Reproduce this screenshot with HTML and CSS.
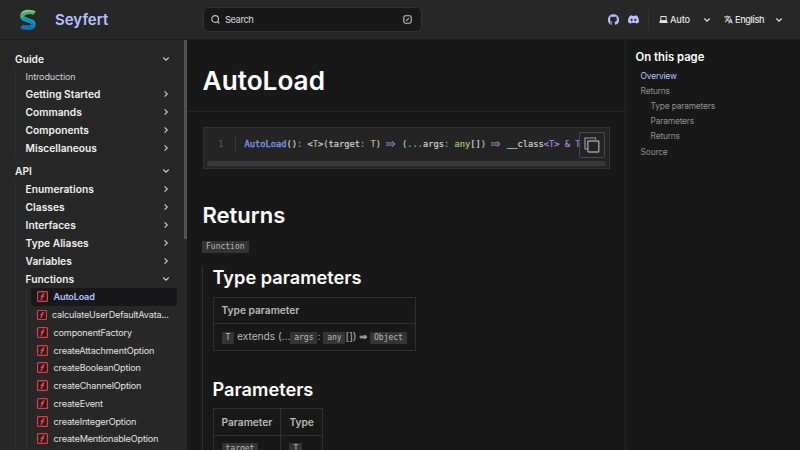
FILE: index.html
```html
<!DOCTYPE html>
<html lang="en">
<head>
<meta charset="utf-8">
<title>AutoLoad | Seyfert</title>
<link rel="stylesheet" href="styles.css">
</head>
<body>
<svg class="defs" aria-hidden="true">
  <symbol id="right" viewBox="0 0 6 8"><path d="M1.6 1.4 4.3 4 1.6 6.6" fill="none" stroke="currentColor" stroke-width="1.05"/></symbol>
  <symbol id="down" viewBox="0 0 8 6"><path d="M1.3 1.5 4 4.2 6.7 1.5" fill="none" stroke="currentColor" stroke-width="1.1"/></symbol>
  <symbol id="fn" viewBox="0 0 11 11"><rect x=".6" y=".6" width="9.8" height="9.8" rx=".9" fill="#29191c" stroke="#dd4044" stroke-width="1.2"/><path d="M7.6 3.1C6.4 2.6 5.8 3 5.6 4L5 7.1C4.8 8 4.3 8.2 3.5 7.9M3.7 5.2H7" fill="none" stroke="#e84449" stroke-width="1.35"/></symbol>
</svg>
<header class="header">
  <a class="brand">
    <svg class="logo" viewBox="0 0 20 22">
      <defs><linearGradient id="g" x1="0" y1="0" x2="0" y2="1"><stop offset="0" stop-color="#80d15b"/><stop offset=".28" stop-color="#27b996"/><stop offset=".6" stop-color="#159fc4"/><stop offset="1" stop-color="#1476bd"/></linearGradient></defs>
      <path d="M16.500 4.300C14.500 3 12 2.800 9.500 3C3.500 3.400 2.800 9 7 10.300L13.200 12.400C17 14 15.800 18.500 11.500 18.700H8C6 18.700 4.500 18.200 3.500 17.200" fill="none" stroke="url(#g)" stroke-width="4.300"/>
      <path d="M4.500 6.500C5.500 4.200 8 3.600 11 3.700L16.500 4.600M5 9.400 13 12.500C15.800 14.200 15 18 11.500 18.500H4" fill="none" stroke="#145b87" stroke-width=".6"/>
    </svg>
    <span class="name">Seyfert</span>
  </a>
  <div class="search">
    <svg width="9" height="9" viewBox="0 0 9 9"><path d="M6.5 6.5 8.4 8.4M7.5 4A3.4 3.4 0 1 1 .7 4a3.4 3.4 0 0 1 6.8 0Z" fill="none" stroke="currentColor" stroke-width="1.1"/></svg>
    <span>Search</span>
    <svg class="key" width="9" height="9" viewBox="0 0 9 9"><rect x=".8" y=".8" width="7.4" height="7.4" rx="1.6" fill="none" stroke="currentColor" stroke-width="1.1"/><path d="M3.1 5.9 5.9 3.1" stroke="currentColor" stroke-width="1.1"/></svg>
  </div>
  <div class="tools">
    <svg class="github" viewBox="0 0 24 24"><path fill="currentColor" d="M12 .3a12 12 0 0 0-3.8 23.4c.6.1.8-.3.8-.6v-2c-3.3.7-4-1.6-4-1.6-.6-1.4-1.4-1.8-1.4-1.8-1-.7.1-.7.1-.7 1.2 0 1.9 1.2 1.9 1.2 1 1.8 2.8 1.3 3.5 1 0-.8.4-1.3.7-1.6-2.7-.3-5.5-1.3-5.5-6 0-1.2.5-2.3 1.3-3.1-.2-.4-.6-1.6 0-3.2 0 0 1-.3 3.4 1.2a11.5 11.5 0 0 1 6 0c2.3-1.5 3.3-1.2 3.3-1.2.6 1.6.2 2.8 0 3.2.9.8 1.3 1.9 1.3 3.2 0 4.6-2.8 5.6-5.5 5.9.5.4.9 1 .9 2.2v3.3c0 .3.1.7.8.6A12 12 0 0 0 12 .3"/></svg>
    <svg class="discord" viewBox="0 0 24 24"><path fill="currentColor" d="M20.3 4.4a19.8 19.8 0 0 0-4.9-1.5c-.2.4-.5.9-.6 1.3a18.3 18.3 0 0 0-5.5 0c-.2-.4-.4-.9-.7-1.3a19.7 19.7 0 0 0-4.9 1.5C.5 9-.3 13.6.1 18.1a19.9 19.9 0 0 0 6 3c.5-.6.9-1.3 1.2-2l-1.9-.9.4-.3a14.2 14.2 0 0 0 12.4 0l.4.3-1.9.9c.4.7.8 1.4 1.2 2a19.8 19.8 0 0 0 6-3c.5-5.2-.8-9.7-3.6-13.7ZM8 15.3c-1.2 0-2.2-1.1-2.2-2.4S6.8 10.5 8 10.5s2.2 1.1 2.2 2.4S9.200 15.3 8 15.3Zm8 0c-1.200 0-2.200-1.100-2.200-2.400s1-2.400 2.200-2.400 2.200 1.100 2.200 2.400-1 2.400-2.200 2.400Z"/></svg>
    <div class="select theme">
      <svg class="ic" viewBox="0 0 9 9"><path d="M1.8 5.7V1.500H7.200V5.700Z" fill="none" stroke="currentColor" stroke-width="1"/><path d="M.9 5.500H8.100L8.700 7.900H.3Z" fill="currentColor"/></svg>
      <span>Auto</span><svg class="down"><use href="#down"/></svg>
    </div>
    <div class="select lang">
      <svg class="ic" viewBox="0 0 24 24"><path fill="currentColor" d="m12.9 15-2.500-2.500c1.700-1.900 3-4.200 3.700-6.500H17V4h-7V2H8v2H1v2h11.200C11.500 7.900 10.400 9.800 9 11.300 8.100 10.300 7.300 9.200 6.700 8h-2c.7 1.600 1.700 3.200 3 4.600l-5.100 5L4 19l5-5 3.100 3.100.8-2.100Zm5.600-5h-2L12 22h2l1.100-3h4.800l1.100 3h2l-4.500-12Zm-2.600 7 1.600-4.300 1.600 4.300h-3.200Z" stroke="currentColor" stroke-width=".8"/></svg>
      <span>English</span><svg class="down"><use href="#down"/></svg>
    </div>
  </div>
</header>
<div class="layout">
  <nav class="sidebar">
    <div class="group top"><span>Guide</span><svg class="down"><use href="#down"/></svg></div>
    <div class="branch guide">
      <a class="page">Introduction</a>
      <div class="group"><span>Getting Started</span><svg class="right"><use href="#right"/></svg></div>
      <div class="group"><span>Commands</span><svg class="right"><use href="#right"/></svg></div>
      <div class="group"><span>Components</span><svg class="right"><use href="#right"/></svg></div>
      <div class="group"><span>Miscellaneous</span><svg class="right"><use href="#right"/></svg></div>
    </div>
    <div class="group top"><span>API</span><svg class="down"><use href="#down"/></svg></div>
    <div class="branch">
      <div class="group"><span>Enumerations</span><svg class="right"><use href="#right"/></svg></div>
      <div class="group"><span>Classes</span><svg class="right"><use href="#right"/></svg></div>
      <div class="group"><span>Interfaces</span><svg class="right"><use href="#right"/></svg></div>
      <div class="group"><span>Type Aliases</span><svg class="right"><use href="#right"/></svg></div>
      <div class="group"><span>Variables</span><svg class="right"><use href="#right"/></svg></div>
      <div class="group"><span>Functions</span><svg class="down"><use href="#down"/></svg></div>
      <div class="leaves">
        <a class="leaf current"><svg><use href="#fn"/></svg><span>AutoLoad</span></a>
        <a class="leaf long"><svg viewBox="0 0 11 11"><use href="#fn" width="11" height="11"/></svg><span>calculateUserDefaultAvata...</span></a>
        <a class="leaf"><svg><use href="#fn"/></svg><span>componentFactory</span></a>
        <a class="leaf"><svg><use href="#fn"/></svg><span>createAttachmentOption</span></a>
        <a class="leaf"><svg><use href="#fn"/></svg><span>createBooleanOption</span></a>
        <a class="leaf"><svg><use href="#fn"/></svg><span>createChannelOption</span></a>
        <a class="leaf"><svg><use href="#fn"/></svg><span>createEvent</span></a>
        <a class="leaf"><svg><use href="#fn"/></svg><span>createIntegerOption</span></a>
        <a class="leaf"><svg><use href="#fn"/></svg><span>createMentionableOption</span></a>
      </div>
    </div>
    <div class="thumb"></div>
  </nav>
  <main class="main">
    <div class="title"><h1>AutoLoad</h1></div>
    <div class="content">
      <div class="code">
        <div class="line"><span class="num">1</span><code><b class="fn">AutoLoad</b>()<i class="op">:</i> &lt;<i class="ty">T</i>&gt;<i class="pa">(</i>target<i class="op">:</i> <i class="ty">T</i><i class="pa">)</i> <span class="arrow"><svg viewBox="0 0 10 6"><path d="M0 1.900H7.700M0 4.100H7.700M6.200.4 9 3 6.200 5.600" fill="none" stroke="currentColor" stroke-width=".9"/></svg></span> <i class="pa">(</i><i class="op">...</i>args<i class="op">:</i> <i class="any">any</i>[]<i class="pa">)</i> <span class="arrow"><svg viewBox="0 0 10 6"><path d="M0 1.900H7.700M0 4.100H7.700M6.200.4 9 3 6.200 5.600" fill="none" stroke="currentColor" stroke-width=".9"/></svg></span> __class<i class="kw">&lt;</i><i class="fn">T</i><i class="kw">&gt;</i> <i class="kw">&amp;</i> <i class="fn">T</i></code></div>
        <div class="scroll"></div>
        <div class="copy"><svg viewBox="0 0 16 16"><path d="M3.500 12H1V1H11.500V2.500" fill="none" stroke="currentColor" stroke-width="1.200"/><rect x="3.800" y="4" width="11" height="11" rx=".7" fill="none" stroke="currentColor" stroke-width="1.400"/></svg></div>
      </div>
      <h2>Returns</h2>
      <p class="ret"><code class="tag">Function</code></p>
      <div class="nested">
        <h3>Type parameters</h3>
        <table class="t1">
          <tr><th>Type parameter</th></tr>
          <tr><td><code class="tag">T</code> extends (...<code class="tag">args</code>: <code class="tag">any</code>[]) <span class="imp">⇒</span> <code class="tag">Object</code></td></tr>
        </table>
        <h3 class="second">Parameters</h3>
        <table class="t2">
          <tr><th>Parameter</th><th>Type</th></tr>
          <tr><td><code class="tag">target</code></td><td><code class="tag">T</code></td></tr>
        </table>
      </div>
    </div>
  </main>
  <aside class="toc">
    <h4>On this page</h4>
    <a class="on">Overview</a>
    <a>Returns</a>
    <a class="sub">Type parameters</a>
    <a class="sub">Parameters</a>
    <a class="sub">Returns</a>
    <a>Source</a>
  </aside>
</div>
</body>
</html>
```
FILE: styles.css
```css
* { box-sizing: border-box; }
html, body { height: 100%; overflow: hidden; }
body { margin: 0; background: #181818; color: #c2c2c2; font-family: Inter, sans-serif; font-size: 9px; display: flex; flex-direction: column; }
.defs { display: none; }
svg { flex: none; display: block; }
i { font-style: normal; }
.header { height: 40px; flex: none; background: #272727; border-bottom: 1px solid #202020; display: flex; align-items: center; }
.brand { width: 203px; display: flex; align-items: center; padding-left: 18px; }
.logo { width: 20px; height: 22px; }
.name { margin-left: 17px; color: #b3c1ff; font-size: 15px; font-weight: 600; }
.search { width: 219px; height: 25px; border: 1px solid #333; border-radius: 5px; background: #181818; display: flex; align-items: center; padding: 0 9px 0 7px; color: #c2c2c2; }
.search span { margin-left: 5px; font-size: 9.2px; font-weight: 500; letter-spacing: -.4px; }
.key { margin-left: auto; }
.tools { flex: 1; display: flex; align-items: center; padding-left: 186px; color: #b3c1ff; }
.github { width: 11px; height: 11px; }
.discord { width: 11px; height: 11px; margin-left: 9px; }
.select { flex: none; display: flex; align-items: center; color: #e4e4e4; font-size: 9.200px; font-weight: 500; letter-spacing: -.2px; }
.theme { width: 63px; margin-left: 9px; padding-left: 10px; height: 20px; border-left: 1px solid #343434; }
.lang { width: 59px; margin-left: 13px; letter-spacing: -.4px; }
.select .ic { width: 9px; height: 9px; margin-right: 2px; }
.select .down { margin-left: auto; }
.down { width: 8px; height: 6px; }
.right { width: 6px; height: 8px; margin-right: 1px; }
.layout { flex: 1; min-height: 0; display: flex; }
.sidebar { position: relative; width: 187px; flex: none; background: #272727; padding: 10px 17px 0 15px; overflow: hidden; }
.thumb { position: absolute; right: 0; top: 0; width: 3px; height: 199px; background: #535353; }
.group { height: 18px; display: flex; align-items: center; justify-content: space-between; font-weight: 600; font-size: 10.200px; color: #f0f0f0; }
.group span { letter-spacing: .02px; }
.group svg { color: #d2d2d2; }
.branch { border-left: 1px solid #303030; padding-left: 9.600px; }
.guide { margin-bottom: 5px; }
.page { display: flex; align-items: center; height: 17px; font-size: 9px; letter-spacing: -.1px; color: #d0d0d0; }
.leaves { border-left: 1px solid #343434; padding-left: 4.400px; margin-right: -7px; }
.leaf { display: flex; align-items: center; height: 17.750px; padding-left: 6px; font-size: 9.100px; letter-spacing: -.18px; color: #e2e2e2; white-space: nowrap; border-radius: 2px; }
.leaf svg { width: 11px; height: 11px; margin-right: 5.600px; }
.leaf.long svg { width: 10px; height: 10px; margin-right: 5px; }
.current { background: #18181b; color: #b3c1ff; font-weight: 600; }
.main { width: 438px; flex: none; }
.title { height: 72px; border-bottom: 1px solid #252525; padding-left: 15.600px; }
h1, h2, h3, h4, p { margin: 0; color: #fff; font-weight: 600; }
h1 { font-size: 26.200px; line-height: 32px; padding-top: 25px; }
.content { padding: 15px 15px 0 15.500px; }
.code { position: relative; height: 42px; border: 1px solid #323232; background: #242424; padding: 7px 3px 0; overflow: hidden; }
.line { display: flex; height: 17px; align-items: center; white-space: pre; font: 8.730px "DejaVu Sans Mono", monospace; color: #ccd1d8; }
.num { width: 29px; height: 16px; line-height: 16px; border-right: 1px solid #30393b; text-align: right; padding-right: 11px; color: #4b5f70; }
.line code { margin-left: 9px; font: inherit; -webkit-text-stroke: .2px currentColor; }
.fn { color: #7393e5; }
b.fn { font-weight: 400; -webkit-text-stroke: .4px currentColor; }
.op { color: #65b8b0; }
.ty { color: #d6a86d; }
.pa { color: #a8d1b5; }
.kw, .arrow { color: #b788d8; }
.any { color: #a9c76b; }
.arrow { display: inline-block; width: 2ch; }
.arrow svg { width: 10px; height: 6px; }
.scroll { height: 5px; border-radius: 3px; background: #393939; margin-top: 9px; }
.copy { position: absolute; right: 4px; top: 4px; width: 26px; height: 26px; border: 1px solid #4a4a4a; border-radius: 2px; background: #242424; color: #9a9a9a; padding: 4px; }
.copy svg { width: 16px; height: 16px; }
h2 { font-size: 22px; line-height: 26px; margin: 33px 0 0; }
.ret { height: 15px; margin: 12px 0 0 -.5px; font-weight: 400; }
.tag { display: inline-block; height: 12px; padding: 0 4px; background: #343434; color: #b9b9b9; font: 8px/12px "DejaVu Sans Mono", monospace; }
.nested { border-left: 1px solid #303030; padding-left: 9.500px; margin: 11px 0 0 -.5px; }
h3 { font-size: 18.200px; line-height: 22px; }
table { border-collapse: collapse; margin-top: 8.500px; font-size: 10.200px; color: #b9b9b9; }
th, td { border: 1px solid #303030; height: 26.500px; padding: 0 8px; text-align: left; white-space: nowrap; }
th { font-weight: 600; }
.t1 { width: 203px; }
.t1 td { letter-spacing: -.04px; }
.t2 { width: 110px; }
.second { margin-top: 27px; }
.imp { font-family: "DejaVu Sans", sans-serif; font-size: 9.500px; -webkit-text-stroke: .3px currentColor; }
.toc { flex: 1; border-left: 1px solid #252525; padding: 9px 0 0 9.600px; }
h4 { font-size: 11.300px; line-height: 16px; margin-bottom: 3px; }
.toc a { display: flex; height: 15.200px; align-items: center; padding-left: 5px; font-size: 8.400px; letter-spacing: -.18px; color: #8f8f8f; }
.toc .sub { padding-left: 15px; }
.toc .on { color: #b3c1ff; }
```
